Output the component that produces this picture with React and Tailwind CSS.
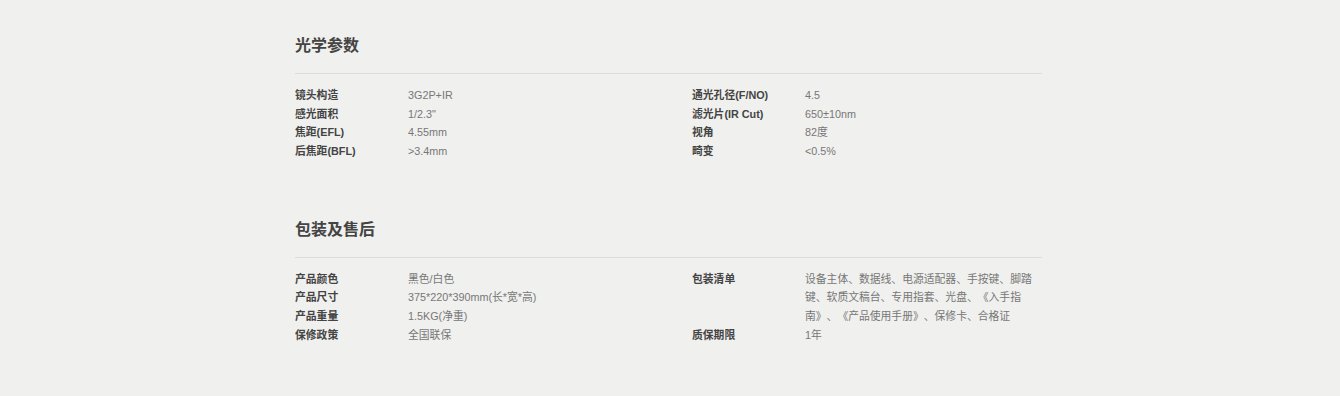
import React from "react";

const font = { fontFamily: '"Liberation Sans", Arial, "Noto Sans CJK SC", sans-serif' };

function Row({ label, value }) {
  return (
    <div className="flex leading-[18.67px]">
      <div className="w-[113px] shrink-0 font-bold text-[#444]">{label}</div>
      <div className="w-[232px] text-[#777]">{value}</div>
    </div>
  );
}

function Section({ title, left, right, className }) {
  return (
    <div className={className}>
      <h2 className="text-[16px] leading-[24px] font-bold text-[#444]">{title}</h2>
      <div className="mt-[15px] h-px bg-[#dcdcdc]" />
      <div className="mt-[12px] flex text-[10.8px] [text-spacing-trim:space-all]">
        <div className="w-[397px] shrink-0 flex flex-col">
          {left.map(([l, v]) => (
            <Row key={l} label={l} value={v} />
          ))}
        </div>
        <div className="flex flex-col">
          {right.map(([l, v]) => (
            <Row key={l} label={l} value={v} />
          ))}
        </div>
      </div>
    </div>
  );
}

export default function App() {
  return (
    <div className="w-[1340px] h-[396px] bg-[#f0f0ee] overflow-hidden" style={font}>
      <div className="ml-[295px] w-[747px] pt-[34px]">
        <Section
          title="光学参数"
          left={[
            ["镜头构造", "3G2P+IR"],
            ["感光面积", '1/2.3"'],
            ["焦距(EFL)", "4.55mm"],
            ["后焦距(BFL)", ">3.4mm"],
          ]}
          right={[
            ["通光孔径(F/NO)", "4.5"],
            ["滤光片(IR Cut)", "650±10nm"],
            ["视角", "82度"],
            ["畸变", "<0.5%"],
          ]}
        />
        <Section
          className="mt-[57px]"
          title="包装及售后"
          left={[
            ["产品颜色", "黑色/白色"],
            ["产品尺寸", "375*220*390mm(长*宽*高)"],
            ["产品重量", "1.5KG(净重)"],
            ["保修政策", "全国联保"],
          ]}
          right={[
            ["包装清单", "设备主体、数据线、电源适配器、手按键、脚踏键、软质文稿台、专用指套、光盘、《入手指南》、《产品使用手册》、保修卡、合格证"],
            ["质保期限", "1年"],
          ]}
        />
      </div>
    </div>
  );
}
